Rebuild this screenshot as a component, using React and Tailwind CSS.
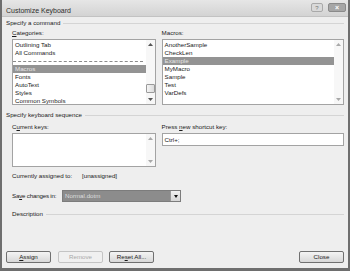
import React from 'react';

const font = { fontFamily: '"Liberation Sans", Arial, sans-serif' };

const Arrow = ({ down, dim }) => (
  <svg width="5" height="3" viewBox="0 0 5 3">
    <path d={down ? 'M0 0 L5 0 L2.5 3 Z' : 'M0 3 L5 3 L2.5 0 Z'} fill={dim ? '#a8a8a8' : '#555'} />
  </svg>
);

const Scrollbar = ({ thumb, dim }) => (
  <div className="w-[9px] h-full flex flex-col items-center bg-[#f7f7f7]">
    <div className="h-[9px] w-full flex items-center justify-center">
      <Arrow dim={dim} />
    </div>
    <div className="flex-1 w-full relative">
      {thumb && (
        <div className="absolute left-[0px] right-[0px] top-[35px] h-[9px] rounded-[1px] border border-[#9a9a9a] bg-gradient-to-r from-[#f4f4f4] to-[#dcdcdc]" />
      )}
    </div>
    <div className="h-[9px] w-full flex items-center justify-center">
      <Arrow down dim={dim} />
    </div>
  </div>
);

const Heading = ({ children, className = '' }) => (
  <div className={`flex items-center h-[8px] gap-[3px] ${className}`}>
    <span className="whitespace-nowrap">{children}</span>
    <div className="flex-1 h-px bg-[#d4d4d4]" />
  </div>
);

const categories = ['Outlining Tab', 'All Commands', '---', 'Macros', 'Fonts', 'AutoText', 'Styles', 'Common Symbols'];
const macros = ['AnotherSample', 'CheckLen', 'Example', 'MyMacro', 'Sample', 'Test', 'VarDefs'];

const ListItem = ({ label, selected }) => {
  if (label === '---') {
    return (
      <div className="h-[8px] flex items-center pr-[3px]">
        <div className="w-full border-t border-dashed border-[#8a8a8a]" />
      </div>
    );
  }
  return (
    <div className={`h-[8px] leading-[8px] pl-[2px] whitespace-nowrap ${selected ? 'bg-[#939393] text-[#e6e6e6]' : 'text-[#1a1a1a]'}`}>
      {label}
    </div>
  );
};

const Button = ({ children, disabled, className = '' }) => (
  <div
    className={`h-[12px] w-[45px] flex items-center justify-center rounded-[2px] border ${
      disabled ? 'border-[#c4c4c4] text-[#a9a9a9] bg-[#f0f0f0]' : 'border-[#707070] text-[#1a1a1a] bg-gradient-to-b from-[#f4f4f4] to-[#d8d8d8]'
    } ${className}`}
  >
    {children}
  </div>
);

export default function App() {
  return (
    <div
      className="w-[350px] h-[271px] bg-[#eeeeee] border-x-2 border-b-[3px] border-[#6e6e6e] flex flex-col text-[6.2px] leading-[8px] text-[#1a1a1a]"
      style={font}
    >
      {/* Title bar */}
      <div className="h-[17px] shrink-0 bg-gradient-to-b from-[#e6e6e6] to-[#d3d3d3] border-b border-[#c2c2c2] flex items-start justify-between pl-[4px] pr-[2px]">
        <span className="text-[7px] leading-[8px] text-[#2e2e2e] mt-[7px]">Customize Keyboard</span>
        <div className="flex items-center gap-[5px] mt-[3px]">
          <div className="w-[12px] h-[9px] rounded-[2px] border border-[#a9a9a9] bg-[#d9d9d9] flex items-center justify-center text-[6px] text-[#777]">?</div>
          <div className="w-[18px] h-[9px] rounded-[2px] border border-[#8a8a8a] bg-[#a6a6a6] flex items-center justify-center text-[7px] text-white font-bold">×</div>
        </div>
      </div>

      <div className="flex-1 flex flex-col pl-[4px] pr-[4px]">
        <Heading className="mt-[2px]">Specify a command</Heading>

        <div className="flex gap-[6px] pl-[6px] mt-[2px] h-[8px]">
          <div className="w-[144px]"><span className="underline">C</span>ategories:</div>
          <div className="w-[183px]">Macros:</div>
        </div>

        <div className="flex gap-[6px] pl-[6px] mt-[2px] h-[66px]">
          <div className="w-[144px] h-full bg-white border border-[#a3a3a3] flex overflow-hidden">
            <div className="flex-1 pt-[1px] overflow-hidden">
              {categories.map((c) => (
                <ListItem key={c} label={c} selected={c === 'Macros'} />
              ))}
            </div>
            <Scrollbar thumb />
          </div>
          <div className="w-[183px] h-full bg-white border border-[#a3a3a3] flex overflow-hidden">
            <div className="flex-1 pt-[1px] overflow-hidden">
              {macros.map((m) => (
                <ListItem key={m} label={m} selected={m === 'Example'} />
              ))}
            </div>
            <Scrollbar dim />
          </div>
        </div>

        <Heading className="mt-[6px]">Specify keyboard sequence</Heading>

        <div className="flex gap-[6px] pl-[6px] mt-[4px] h-[8px]">
          <div className="w-[144px]">C<span className="underline">u</span>rrent keys:</div>
          <div className="w-[183px]">Press <span className="underline">n</span>ew shortcut key:</div>
        </div>

        <div className="flex gap-[6px] pl-[6px] mt-[2px] h-[34px] items-start">
          <div className="w-[144px] h-full bg-white border border-[#a3a3a3] flex">
            <div className="flex-1" />
            <Scrollbar dim />
          </div>
          <div className="w-[183px] h-[13px] bg-white border border-[#a3a3a3] flex items-center pl-[2px]">Ctrl+;</div>
        </div>

        <div className="flex pl-[6px] mt-[5px] h-[8px]">
          <span className="w-[70px] whitespace-nowrap">Currently assigned to:</span>
          <span>[unassigned]</span>
        </div>

        <div className="flex items-center pl-[6px] mt-[10px] h-[12px]">
          <span className="w-[50px] whitespace-nowrap tracking-[-0.2px]">Sa<span className="underline">v</span>e changes in:</span>
          <div className="flex h-full border border-[#7c7c7c]">
            <div className="w-[107px] h-full bg-[#8c8c8c] text-[#dedede] flex items-center pl-[2px]">Normal.dotm</div>
            <div className="w-[10px] h-full bg-gradient-to-b from-[#f0f0f0] to-[#d6d6d6] border-l border-[#9a9a9a] flex items-center justify-center">
              <svg width="4" height="3" viewBox="0 0 4 3"><path d="M0 0 L4 0 L2 3 Z" fill="#111" /></svg>
            </div>
          </div>
        </div>

        <Heading className="mt-[8px] pl-[6px]">Description</Heading>

        <div className="flex-1" />

        <div className="flex items-center mb-[5px]">
          <Button><span className="underline">A</span>ssign</Button>
          <Button disabled className="ml-[7px]">Remove</Button>
          <Button className="ml-[6px]">Re<span className="underline">s</span>et All...</Button>
          <div className="flex-1" />
          <Button>Close</Button>
        </div>
      </div>
    </div>
  );
}
